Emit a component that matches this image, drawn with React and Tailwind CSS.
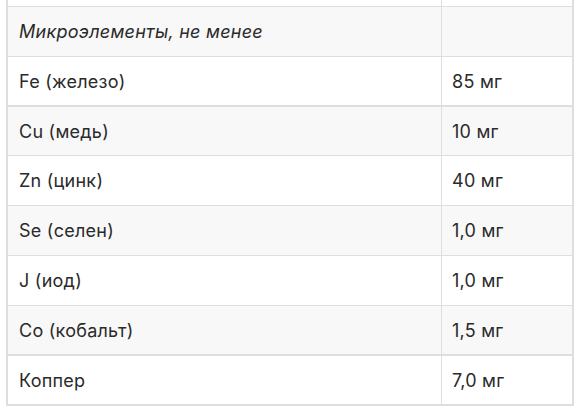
const rows = [
  { name: 'Микроэлементы, не менее', value: '', italic: true, h: 'h-[50px]', b: 'border-b' },
  { name: 'Fe (железо)', value: '85 мг', h: 'h-[50px]', b: 'border-b-2' },
  { name: 'Cu (медь)', value: '10 мг', h: 'h-[49px]', b: 'border-b' },
  { name: 'Zn (цинк)', value: '40 мг', h: 'h-[50px]', b: 'border-b' },
  { name: 'Se (селен)', value: '1,0 мг', h: 'h-[50px]', b: 'border-b' },
  { name: 'J (иод)', value: '1,0 мг', h: 'h-[50px]', b: 'border-b' },
  { name: 'Co (кобальт)', value: '1,5 мг', h: 'h-[50px]', b: 'border-b-2' },
  { name: 'Коппер', value: '7,0 мг', h: 'h-[50px]', b: 'border-b-2' },
];

export default function App() {
  return (
    <div className="w-[574px] h-[410px] bg-white overflow-hidden" style={{ fontFamily: 'Inter, "Open Sans", sans-serif' }}>
      <div className="ml-[6px] w-[568px] border-l-2 border-r-2 border-[#dedede]">
        <div className="flex h-[7px] border-b border-[#dedede]">
          <div className="w-[434px] border-r border-[#dedede]" />
          <div className="flex-1" />
        </div>
        {rows.map((row, i) => (
          <div
            key={row.name}
            className={`flex ${row.h} ${row.b} border-[#dedede] ${i % 2 === 0 ? 'bg-[#f8f8f8]' : 'bg-white'}`}
          >
            <div className={`w-[434px] border-r border-[#dedede] flex items-center pl-[11px] text-[18px] tracking-[0.25px] text-[#2a2a2a] ${row.italic ? 'italic' : ''}`}>
              {row.name}
            </div>
            <div className="flex-1 flex items-center pl-[10px] text-[18px] tracking-[0.25px] text-[#2a2a2a]">
              {row.value}
            </div>
          </div>
        ))}
      </div>
    </div>
  );
}
